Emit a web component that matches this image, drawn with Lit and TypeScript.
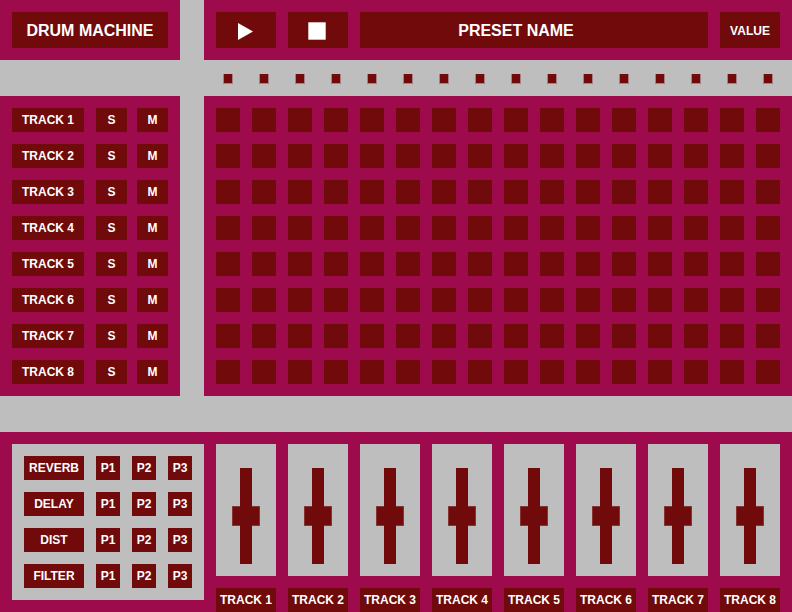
import { LitElement, html, css, svg } from "lit";
import { customElement, state } from "lit/decorators.js";

const TRACKS = [1, 2, 3, 4, 5, 6, 7, 8];
const STEPS = Array.from({ length: 16 }, (_, i) => i + 1);
const EFFECTS = ["REVERB", "DELAY", "DIST", "FILTER"];
const PARAMS = ["P1", "P2", "P3"];

const playIcon = svg`<path d="M0 0 L15 8.5 L0 17 Z" fill="#fff" />`;
const stopIcon = svg`<rect x="0.3" y="0.3" width="17.4" height="17.4" fill="#fff" />`;

@customElement("app-root")
export class AppRoot extends LitElement {
  @state() private preset = "PRESET NAME";

  static styles = css`
    :host {
      --panel: #9e0b4d;
      --block: #700a0b;
      --metal: #bebebe;
      display: block;
      background: var(--metal);
      color: #fff;
      font: bold 12px/24px "Liberation Sans", Arial, Helvetica, sans-serif;
    }
    * {
      box-sizing: border-box;
    }
    button,
    input {
      appearance: none;
      margin: 0;
      padding: 0;
      border: 0;
      border-radius: 0;
      font: inherit;
      color: inherit;
    }
    .block {
      display: flex;
      align-items: center;
      justify-content: center;
      height: 24px;
      background: var(--block);
      white-space: nowrap;
    }
    .tall {
      height: 36px;
      padding-top: 2px;
    }
    .title {
      margin: 0;
      font-size: 16px;
    }
    .preset {
      padding-right: 36px;
    }
    .upper {
      display: grid;
      grid-template-columns: 180px 1fr;
      column-gap: 24px;
    }
    .panel {
      padding: 12px;
      background: var(--panel);
    }
    .transport {
      display: grid;
      grid-template-columns: 60px 60px 1fr 60px;
      gap: 12px;
    }
    .glyph {
      display: block;
      margin-right: 2px;
    }
    .lights,
    .steps {
      display: grid;
      grid-template-columns: repeat(16, 1fr);
      gap: 12px;
    }
    .lights {
      grid-column: 2;
      height: 36px;
      padding: 14px 12px 12px;
      justify-items: center;
    }
    .light {
      width: 10px;
      height: 10px;
      background: var(--block);
      border: 1px solid #a88080;
      border-top: 0;
    }
    .rows {
      display: grid;
      gap: 12px;
    }
    .track {
      display: grid;
      grid-template-columns: 1fr 72px;
      column-gap: 12px;
    }
    .pair {
      display: grid;
      grid-template-columns: 1fr 1fr;
      gap: 10px;
    }
    .step {
      width: 100%;
      height: 24px;
      background: var(--block);
    }
    .mixer {
      display: grid;
      grid-template-columns: 192px 1fr;
      align-items: start;
      gap: 12px;
      margin-top: 36px;
      padding: 12px 12px 0;
      background: var(--panel);
    }
    .effects {
      padding: 12px;
      background: var(--metal);
    }
    .effect {
      display: grid;
      grid-template-columns: 60px 1fr 1fr 1fr;
      gap: 12px;
    }
    .faders {
      display: grid;
      grid-template-columns: repeat(8, 1fr);
      gap: 12px;
    }
    .channel {
      display: grid;
      gap: 12px;
    }
    .well {
      display: flex;
      justify-content: center;
      padding: 24px 0 12px;
      background: var(--metal);
    }
    .fader {
      writing-mode: vertical-lr;
      direction: rtl;
      width: 28px;
      height: 96px;
      background: linear-gradient(var(--block), var(--block)) center / 12px 100% no-repeat;
    }
    .fader::-webkit-slider-thumb {
      appearance: none;
      width: 28px;
      height: 20px;
      background:
        linear-gradient(var(--block), var(--block)) center / 12px 100% no-repeat,
        linear-gradient(var(--block), var(--block)) center / 26px 18px no-repeat,
        #833636;
    }
  `;

  private trackRow(n: number) {
    return html`<div class="track">
      <div class="block">TRACK ${n}</div>
      <div class="pair">
        <button class="block" aria-label="Solo track ${n}">S</button>
        <button class="block" aria-label="Mute track ${n}">M</button>
      </div>
    </div>`;
  }

  private effectRow(name: string) {
    return html`<div class="effect">
      <div class="block">${name}</div>
      ${PARAMS.map((p) => html`<button class="block" aria-label="${name} ${p}">${p}</button>`)}
    </div>`;
  }

  private channel(n: number) {
    return html`<div class="channel">
      <div class="well">
        <input class="fader" id="fader-${n}" type="range" min="0" max="100" value="50" />
      </div>
      <label class="block" for="fader-${n}">TRACK ${n}</label>
    </div>`;
  }

  render() {
    return html`
      <main>
        <div class="upper">
          <header class="panel"><h1 class="block tall title">DRUM MACHINE</h1></header>
          <div class="panel transport">
            <button class="block tall" aria-label="Play">
              <svg class="glyph" width="15" height="17" viewBox="0 0 15 17">${playIcon}</svg>
            </button>
            <button class="block tall" aria-label="Stop">
              <svg class="glyph" width="18" height="18" viewBox="0 0 18 18">${stopIcon}</svg>
            </button>
            <button class="block tall title preset">${this.preset}</button>
            <button class="block tall">VALUE</button>
          </div>
          <div class="lights">${STEPS.map(() => html`<span class="light"></span>`)}</div>
          <div class="panel rows">${TRACKS.map((n) => this.trackRow(n))}</div>
          <div class="panel rows">
            ${TRACKS.map(
              (n) => html`<div class="steps">
                ${STEPS.map(
                  (s) => html`<input class="step" type="checkbox" aria-label="Track ${n} step ${s}" />`
                )}
              </div>`
            )}
          </div>
        </div>
        <section class="mixer">
          <div class="effects rows">${EFFECTS.map((e) => this.effectRow(e))}</div>
          <div class="faders">${TRACKS.map((n) => this.channel(n))}</div>
        </section>
      </main>
    `;
  }
}
